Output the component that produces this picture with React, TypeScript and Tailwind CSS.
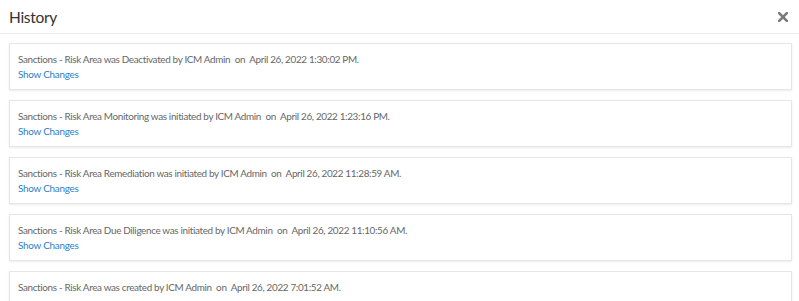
const entries = [
  { text: "Sanctions - Risk Area was Deactivated by ICM Admin", date: "April 26, 2022 1:30:02 PM.", changes: true },
  { text: "Sanctions - Risk Area Monitoring was initiated by ICM Admin", date: "April 26, 2022 1:23:16 PM.", changes: true },
  { text: "Sanctions - Risk Area Remediation was initiated by ICM Admin", date: "April 26, 2022 11:28:59 AM.", changes: true },
  { text: "Sanctions - Risk Area Due Diligence was initiated by ICM Admin", date: "April 26, 2022 11:10:56 AM.", changes: true },
  { text: "Sanctions - Risk Area was created by ICM Admin", date: "April 26, 2022 7:01:52 AM.", changes: false },
];

function HistoryItem({ text, date, changes }: { text: string; date: string; changes: boolean }) {
  return (
    <div className="border border-[#e6e6e6] bg-white shadow-[0_1px_2px_rgba(0,0,0,0.08)] px-[8px] pt-[8px] h-[47px] shrink-0">
      <p className="text-[9.9px] leading-[15px] tracking-[-0.33px] text-[#666] whitespace-pre">
        {text}  on  {date}
      </p>
      {changes && (
        <a href="#" className="block text-[9.9px] leading-[15px] tracking-[-0.25px] text-[#2a7fc9]">
          Show Changes
        </a>
      )}
    </div>
  );
}

export default function App() {
  return (
    <div className="w-[799px] h-[301px] bg-white overflow-hidden font-['Lato',sans-serif]">
      <header className="flex items-center justify-between h-[34px] pl-[9px] pr-[11px] pt-[2px] border-b border-[#ebebeb]">
        <h2 className="text-[15.5px] tracking-[-0.3px] text-[#333]">History</h2>
        <button className="text-[#7a7a7a] mb-[1px]">
          <svg width="10" height="10" viewBox="0 0 10 10">
            <path d="M1.2 1.2 L8.8 8.8 M8.8 1.2 L1.2 8.8" stroke="currentColor" strokeWidth="2.6" strokeLinecap="square" />
          </svg>
        </button>
      </header>
      <div className="flex flex-col gap-[10px] pl-[9px] pr-[7px] pt-[9px]">
        {entries.map((e) => (
          <HistoryItem key={e.date} {...e} />
        ))}
      </div>
    </div>
  );
}
